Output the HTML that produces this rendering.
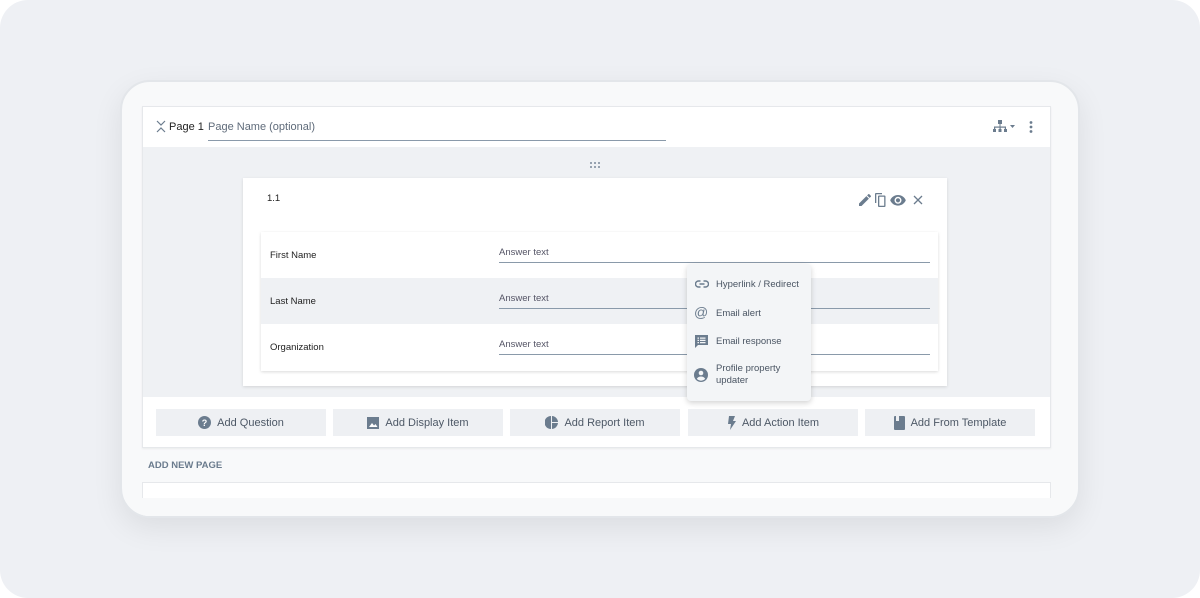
<!DOCTYPE html>
<html><head><style>
*{box-sizing:border-box;margin:0;padding:0}
body{width:1200px;height:598px;background:#fff;font-family:"Liberation Sans",sans-serif;position:relative;overflow:hidden}
.bg{position:absolute;left:0;top:0;width:1200px;height:598px;background:#eef0f4;border-radius:28px}
.frame{position:absolute;left:120px;top:80px;width:960px;height:438px;background:#f8f9fa;border:2px solid #e3e6ea;border-radius:30px;box-shadow:0 10px 30px rgba(0,0,0,.08);overflow:hidden}
.abs{position:absolute}
.card{position:absolute;left:20px;top:24px;width:909px;height:342px;background:#fff;border:1px solid #e6e8eb;box-shadow:0 1px 2px rgba(0,0,0,.06)}
.gray{position:absolute;left:0;top:40px;width:907px;height:250px;background:#eff1f4}
.q{position:absolute;left:100px;top:31px;width:704px;height:208px;background:#fff;box-shadow:0 1px 3px rgba(0,0,0,.12)}
.tbl{position:absolute;left:18px;top:54px;width:677px;height:139px;background:#fff;box-shadow:0 1px 3px rgba(0,0,0,.15)}
.row{position:absolute;left:0;width:677px;height:46px}
.row .l{position:absolute;left:9px;top:18px;font-size:9.5px;color:#222}
.row .a{position:absolute;left:238px;top:15px;width:431px;height:16px;border-bottom:1px solid #8a9aaa;font-size:9.5px;color:#556}
.btn{position:absolute;top:302px;width:170px;height:27px;background:#eef0f3;color:#4d5866;font-size:11px;display:flex;align-items:center;justify-content:center;gap:6px}
.pop{position:absolute;left:687px;top:264px;width:124px;height:137px;background:#f3f5f7;border-radius:4px;box-shadow:0 2px 6px rgba(0,0,0,.18)}
.pi{position:absolute;left:29px;font-size:9.5px;color:#4a5563;line-height:12px}
</style></head><body>
<div class="bg"></div>
<div class="frame">
 <div class="card">
  <svg class="abs" style="left:13px;top:13px" width="10" height="13" viewBox="0 0 10 13" fill="none" stroke="#6b7c8e" stroke-width="1.2"><path d="M1 1l4 4 4-4M1 12l4-4 4 4"/></svg>
  <div class="abs" style="left:26px;top:14px;font-size:11px;color:#222">Page 1</div>
  <div class="abs" style="left:65px;top:14px;width:458px;height:20px;border-bottom:1px solid #8a9aaa;font-size:11px;color:#5f6b7a">Page Name (optional)</div>
  <svg class="abs" style="left:850px;top:12px" width="28" height="16" viewBox="0 0 28 16" fill="#6b7c8e"><rect x="5" y="1" width="4" height="4"/><rect x="6.5" y="5" width="1" height="3"/><rect x="1" y="7.5" width="12" height="1.2"/><rect x="1" y="7.5" width="1.2" height="3"/><rect x="6.5" y="7.5" width="1.2" height="3"/><rect x="11.8" y="7.5" width="1.2" height="3"/><rect x="0" y="10" width="3" height="3"/><rect x="5.5" y="10" width="3" height="3"/><rect x="11" y="10" width="3" height="3"/><path d="M17 6h5l-2.5 3z"/></svg>
  <svg class="abs" style="left:885px;top:13px" width="6" height="14" fill="#6b7c8e"><circle cx="3" cy="2.5" r="1.4"/><circle cx="3" cy="7" r="1.4"/><circle cx="3" cy="11.5" r="1.4"/></svg>
  <div class="gray">
   <svg class="abs" style="left:446px;top:14px" width="12" height="8" fill="#7b8a9a"><circle cx="2" cy="2" r="1"/><circle cx="6" cy="2" r="1"/><circle cx="10" cy="2" r="1"/><circle cx="2" cy="6" r="1"/><circle cx="6" cy="6" r="1"/><circle cx="10" cy="6" r="1"/></svg>
   <div class="q">
    <div class="abs" style="left:24px;top:15px;font-size:9.5px;color:#222">1.1</div>
    <svg class="abs" style="left:614px;top:13px" width="82" height="17" viewBox="0 0 82 17" fill="#6b7c8e"><path d="M2 12.5v2.5h2.5l7.4-7.4-2.5-2.5zM13.8 5.7c.3-.3.3-.7 0-1l-1.5-1.5c-.3-.3-.7-.3-1 0l-1.2 1.2 2.5 2.5z"/><path d="M25 2h-6c-.6 0-1 .4-1 1v9h1.3V3.3H25zM27.5 4.5h-5.5c-.6 0-1 .4-1 1v9.5c0 .6.4 1 1 1h5.5c.6 0 1-.4 1-1V5.5c0-.6-.4-1-1-1zm-.3 10.2h-4.9V5.8h4.9z"/><path d="M41 4c-3.6 0-6.6 2.2-7.8 5.3 1.2 3.1 4.2 5.3 7.8 5.3s6.6-2.2 7.8-5.3C47.6 6.2 44.6 4 41 4zm0 8.8a3.5 3.5 0 110-7 3.5 3.5 0 010 7zm0-5.6a2.1 2.1 0 100 4.2 2.1 2.1 0 000-4.2z"/><path d="M57 5l8 8M65 5l-8 8" stroke="#6b7c8e" stroke-width="1.3"/></svg>
    <div class="tbl">
     <div class="row" style="top:0"><div class="l">First Name</div><div class="a">Answer text</div></div>
     <div class="row" style="top:46px;background:#eff1f4"><div class="l">Last Name</div><div class="a">Answer text</div></div>
     <div class="row" style="top:92px"><div class="l">Organization</div><div class="a">Answer text</div></div>
    </div>
   </div>
  </div>
  <div class="btn" style="left:13px"><svg width="13" height="13" viewBox="0 0 13 13"><circle cx="6.5" cy="6.5" r="6.5" fill="#6b7c8e"/><text x="6.5" y="10" font-size="9" font-weight="bold" fill="#fff" text-anchor="middle" font-family="Liberation Sans">?</text></svg>Add Question</div>
  <div class="btn" style="left:190px"><svg width="12" height="12"><rect width="12" height="12" fill="#6b7c8e"/><path d="M2 10l3-4 2 2.5 1.5-1.5 2 3z" fill="#fff"/></svg>Add Display Item</div>
  <div class="btn" style="left:367px"><svg width="13" height="13" viewBox="0 0 13 13" fill="#6b7c8e"><path d="M6 0v13A6.5 6.5 0 016 0z"/><path d="M7 0a6.5 6.5 0 016 6H7z"/><path d="M7 7h6a6.5 6.5 0 01-6 6z"/></svg>Add Report Item</div>
  <div class="btn" style="left:545px"><svg width="9" height="14" viewBox="0 0 9 14" fill="#6b7c8e"><path d="M2 0h6L6 5h3L3 14l1-6H1z"/></svg>Add Action Item</div>
  <div class="btn" style="left:722px"><svg width="11" height="14"><rect width="11" height="14" rx="1" fill="#6b7c8e"/><rect x="2" y="0" width="3" height="5" fill="#eef0f3"/></svg>Add From Template</div>
 </div>
 <div class="abs" style="left:26px;top:378px;font-size:9.5px;color:#6a7b8d;font-weight:bold">ADD NEW PAGE</div>
 <div class="abs" style="left:20px;top:400px;width:909px;height:40px;background:#fff;border:1px solid #e6e8eb"></div>
 <div class="abs" style="left:0;top:416px;width:960px;height:24px;background:#f8f9fa"></div>
</div>
<div class="pop">
 <svg class="abs" style="left:8px;top:15px" width="14" height="10" viewBox="0 0 14 10" fill="none" stroke="#6b7c8e" stroke-width="1.4"><path d="M5.5 2H3.5a3 3 0 000 6h2M8.5 2h2a3 3 0 010 6h-2M4.5 5h5"/></svg>
 <div class="pi" style="top:15px">Hyperlink / Redirect</div>
 <div class="abs" style="left:7px;top:40px;font-size:14px;color:#6b7c8e">@</div>
 <div class="pi" style="top:44px">Email alert</div>
 <svg class="abs" style="left:8px;top:71px" width="13" height="13" viewBox="0 0 13 13" fill="#6b7c8e"><path d="M0 0h13v10H3l-3 3z"/><path d="M2.5 2.5h1.5v1.2H2.5zM5 2.5h5.5v1.2H5zM2.5 4.8h1.5V6H2.5zM5 4.8h5.5V6H5zM2.5 7h1.5v1.2H2.5zM5 7h5.5v1.2H5z" fill="#f3f5f7"/></svg>
 <div class="pi" style="top:72px">Email response</div>
 <svg class="abs" style="left:7px;top:104px" width="14" height="14" viewBox="0 0 14 14"><circle cx="7" cy="7" r="7" fill="#6b7c8e"/><circle cx="7" cy="5" r="2.3" fill="#f3f5f7"/><path d="M2.8 10.8c1-1.6 2.5-2.3 4.2-2.3s3.2.7 4.2 2.3a5.6 5.6 0 01-8.4 0z" fill="#f3f5f7"/></svg>
 <div class="pi" style="top:99px">Profile property<br>updater</div>
</div>
</body></html>
